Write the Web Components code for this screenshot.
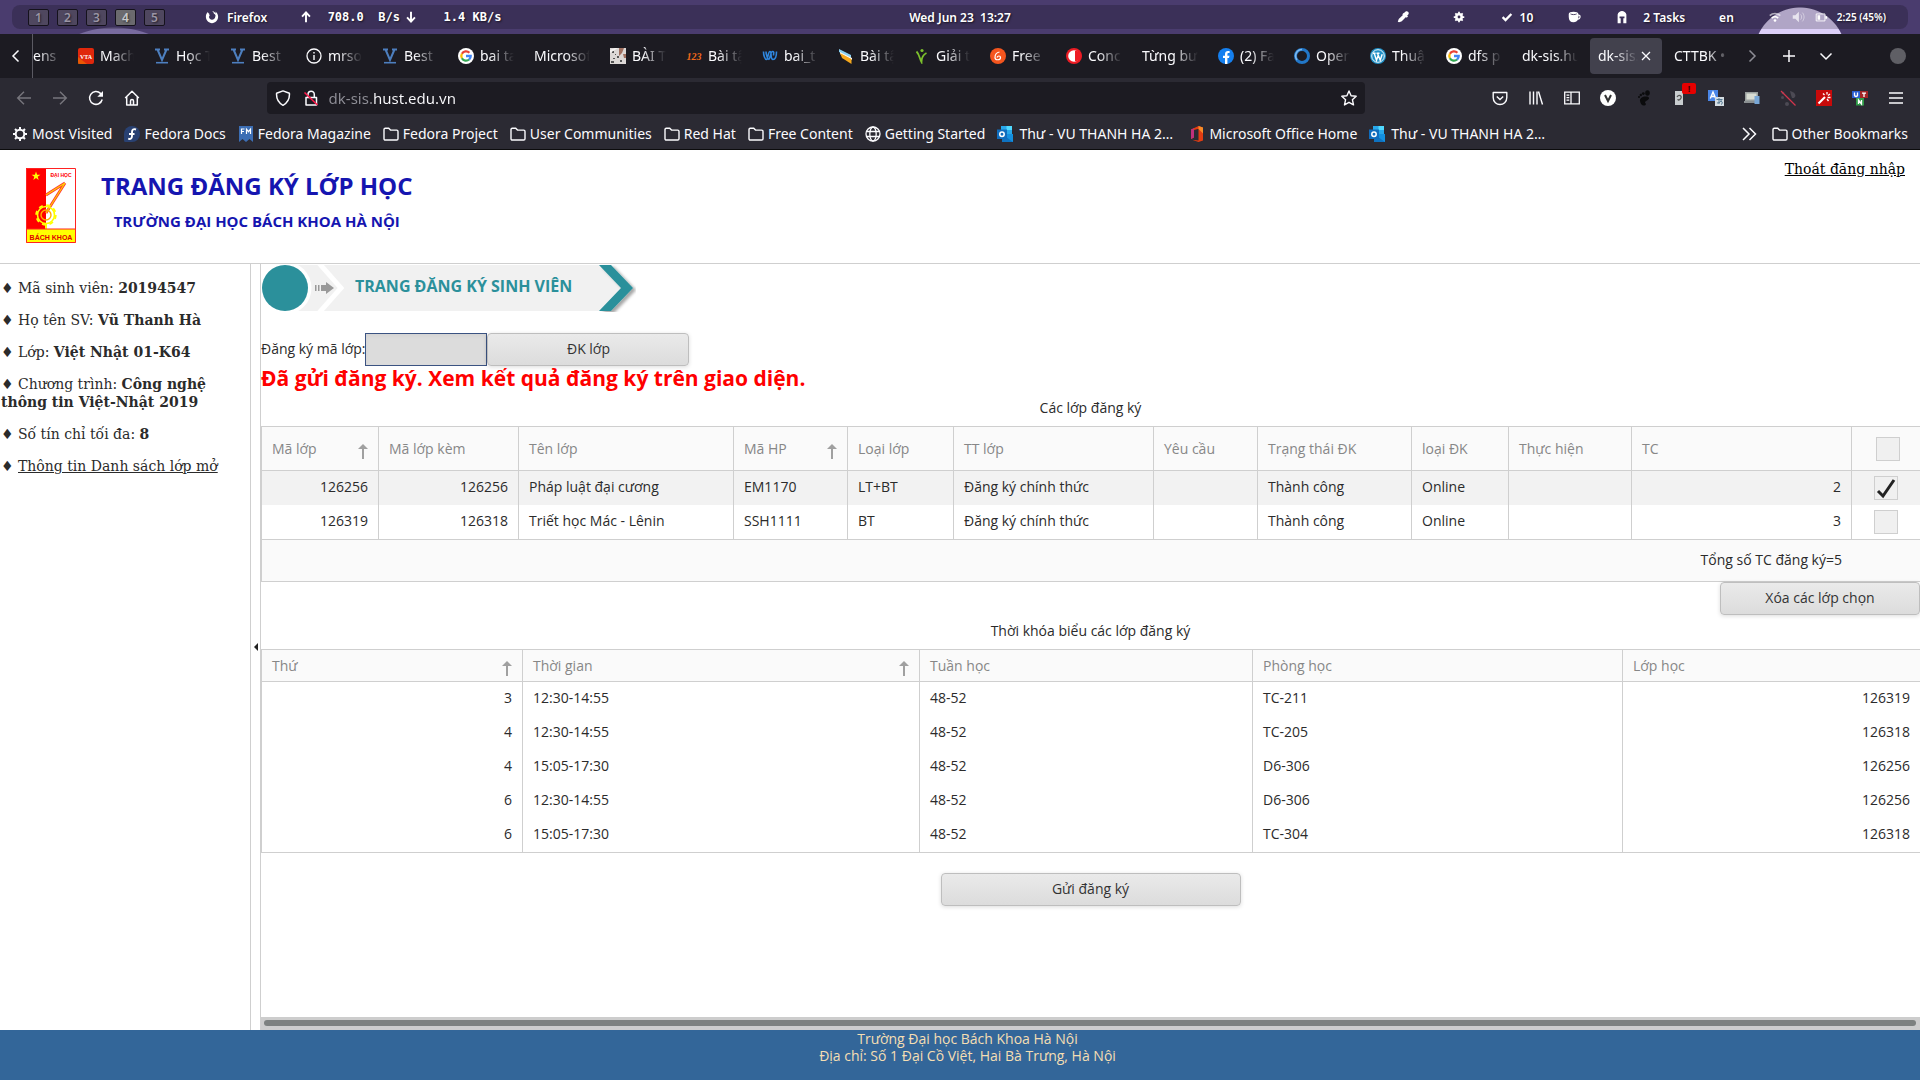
<!DOCTYPE html>
<html lang="vi">
<head>
<meta charset="utf-8">
<title>dk-sis.hust.edu.vn</title>
<style>
  html, body { margin: 0; height: 100%; }
  body { font-family: "Noto Sans", "Open Sans", sans-serif; font-size: 14px; color: #2b2b2b; background: #fff; }
</style>
</head>
<body>
<desktop-screen></desktop-screen>

<script>
const ICONS = {
  firefox: '<path fill="#fff" d="M8 1.2c1.2.8 2 1.800 2.200 3 .8.2 1.400.8 1.700 1.500.3.700.1 1.500-.2 1.900C11.600 9.500 10 11 8 11S4.600 9.600 4.600 8c0-.8.4-1.500.9-1.900-.5-.3-.8-1-.6-1.700-.8-.3-1.500-1-1.600-2C1.800 3.600 1 5.500 1 7.800 1 11.800 4.200 15 8 15s7-3.200 7-7.200c0-2.600-1.200-5-3.200-6.200.4.900.5 1.600.3 2.300C11.200 2.400 9.700 1.500 8 1.200z"/>',
  up: '<path d="M8 14V3M3.500 7.500 8 2.700l4.500 4.800" fill="none" stroke="#fff" stroke-width="2.200"/>',
  down: '<path d="M8 2v11M3.500 8.500 8 13.300l4.500-4.800" fill="none" stroke="#fff" stroke-width="2.200"/>',
  dropper: '<path fill="#fff" d="M9.500 3.200c1-1.700 2.800-2.600 4.300-1.200s.7 3.300-1 4.400l.9.900-1.500 1.500-.8-.7-4.500 4.500c-1 .9-2.300.7-3.400 1.400L2 13.500c.7-1.100.5-2.500 1.400-3.400L7.900 5.600l-.7-.8 1.500-1.500z"/>',
  cog: '<g fill="#fff"><circle cx="8" cy="8" r="4.500"/><path d="M7 2h2v12H7zM2 7h12v2H2zM3.100 4.500l1.400-1.400 8.400 8.400-1.400 1.400zM11.500 3.100l1.400 1.400-8.400 8.400-1.400-1.400z"/></g><circle cx="8" cy="8" r="1.600" fill="#3b3053"/>',
  tick: '<path d="M3 8.200 6.300 11.500 13 4.500" fill="none" stroke="#fff" stroke-width="2.600"/>',
  cup: '<path fill="#fff" d="M2 4.500C2 3 4.500 2 7.500 2S13 3 13 4.500v.7c1.800 0 2.600.8 2.600 2.500S14.500 11 12.400 11.200C11.600 13 10 14 7.500 14 4 14 2 12 2 8z"/><path d="M13 6.800c1 0 1 2.500-.3 2.500M4 4.500c1.500 1 5.500 1 7 0" fill="none" stroke="#3b3053"/>',
  helmet: '<path fill="#fff" d="M3 15V5C3.500 2.500 6 1 8 1s4.500 1.500 5 4v10H9.500V9.500h1.300V7.500H5.200v2h1.300V15z"/>',
  wifi: '<g fill="none" stroke="#fff" stroke-width="1.800"><path d="M2 6.500c3.500-3.400 8.500-3.400 12 0" opacity=".6"/><path d="M4.300 9.200c2.200-2 5.200-2 7.400 0"/></g><circle cx="8" cy="12" r="1.500" fill="#fff"/>',
  volume: '<path fill="#fff" d="M2 6h3l4-4v12l-4-4H2z" opacity=".7"/><path d="M11 5c1.500 1.600 1.500 4.400 0 6M13 3c2.600 3 2.600 7 0 10" fill="none" stroke="#fff" opacity=".5"/>',
  battery: '<path d="M2.500 4.500h10v8h-10z" fill="none" stroke="#fff"/><path fill="#fff" d="M4 6h3v5H4zM13 7h2v3h-2z"/>',
  chevL: '<path d="M10.500 2.500 5 8l5.500 5.500" fill="none" stroke="#fbfbfe" stroke-width="1.500"/>',
  chevR: '<path d="M5.500 2.500 11 8l-5.500 5.500" fill="none" stroke="#8d8d95" stroke-width="1.500"/>',
  chevD: '<path d="M2.500 5.500 8 11l5.500-5.500" fill="none" stroke="#fbfbfe" stroke-width="1.500"/>',
  plus: '<path d="M8 2v12M2 8h12" stroke="#fbfbfe" stroke-width="1.500"/>',
  close: '<path d="M4 4l8 8M12 4l-8 8" stroke="#fbfbfe" stroke-width="1.300"/>',
  profile: '<circle cx="8" cy="8" r="8" fill="#5f5f65"/>',
  vta: '<rect width="16" height="16" rx="2" fill="#e0280c"/><path d="M0 16V9l9 7z" fill="#f07800" opacity=".6"/><text x="8" y="10.500" font-size="6" font-weight="700" text-anchor="middle" fill="#fff" font-family="Liberation Serif">VTA</text>',
  vee: '<path d="M1 1.500h5M10 1.500h5M3.500 1.500 8 12l4.500-10.500" fill="none" stroke="#4d7fbf" stroke-width="2"/><path d="M2 14.700h12" stroke="#4d7fbf" stroke-width="1.600"/>',
  info: '<circle cx="8" cy="8" r="7" fill="none" stroke="#fbfbfe" stroke-width="1.300"/><path d="M8 7v5M8 4v1.600" stroke="#fbfbfe" stroke-width="1.400"/>',
  google: '<circle cx="8" cy="8" r="8" fill="#fff"/><g fill="none" stroke-width="2.300"><path d="M11.400 4.700A4.700 4.700 0 0 0 3.900 5.800" stroke="#ea4335"/><path d="M3.900 5.700a4.700 4.700 0 0 0 0 4.600" stroke="#fbbc05"/><path d="M3.900 10.300a4.700 4.700 0 0 0 7.200 1.200" stroke="#34a853"/><path d="M8 8h4.700a4.700 4.700 0 0 1-1.600 3.600" stroke="#4285f4"/></g>',
  photo: '<path fill="#dcd8d6" d="M0 0h16v16H0z"/><path fill="#555" d="M2 3h2v2H2zM7 8h2v2H7zM3 10h2v1H3zM1 13h3v2H1zM10 12h2v2h-2zM5 6h1v1H5z"/><path fill="#a07060" d="M9 0h5l-2 5-3 3zM13 6h3v4h-2z"/><path fill="#f3f1f0" d="M0 5l8-5H5L0 2z"/>',
  one23: '<text x="8" y="12" font-size="10" font-style="italic" font-weight="700" text-anchor="middle" fill="#f26a1b" font-family="Liberation Serif">123</text>',
  dub: '<path d="M1.500 3.500c0 4 1.500 8 3 8s1.500-8 3.500-8 0 8 3 8 3.500-4 3.500-8M4 3.500c0 4 2 8 3 8s1.500-8 3.500-8 1 2 1 4" fill="none" stroke="#2f86dd" stroke-width="1.600"/>',
  books: '<path fill="#8ad0f0" d="M1 1l12 6v3L1 4z"/><path fill="#fff" d="M2 4l12 6v2L2 6z"/><path fill="#f5a81c" d="M2 5l11.500 6V16L4 10z"/>',
  leafV: '<path d="M2.500 3.500c3 3 3 7 5 10.500 0-4 1-7 5-9" fill="none" stroke="#7cc02c" stroke-width="1.800"/><circle cx="8" cy="2.500" r="1.600" fill="#7cc02c"/>',
  orangeG: '<circle cx="8" cy="8" r="8" fill="#f4551e"/><path d="M9.500 4C6.500 4.500 5 7 5 9.500c0 3 5.500 3 5.500 0 0-2-3-2-3.500 0" fill="none" stroke="#fff" stroke-width="1.200"/>',
  halfO: '<circle cx="8" cy="8" r="8" fill="#ed1c24"/><circle cx="8" cy="8" r="5.800" fill="#fff"/><path fill="#ed1c24" d="M9 3h1.500a5 5 0 0 1 0 10H9z"/>',
  facebook: '<circle cx="8" cy="8" r="8" fill="#1580f0"/><path fill="#fff" d="M7 16V10H5V7.700h2V6c0-2 1.200-3.100 3-3.100l1.600.1v2h-1c-.9 0-1.200.5-1.200 1.200v1.500h2.100L11 10H9.400v6z"/>',
  ring: '<circle cx="8" cy="8" r="6.500" fill="none" stroke="#2277c8" stroke-width="3"/><path d="M8 1.500A6.500 6.500 0 0 0 3 12" fill="none" stroke="#7db9ee" stroke-width="1.600"/>',
  wordpress: '<circle cx="8" cy="8" r="8" fill="#1f8fc6"/><circle cx="8" cy="8" r="6.300" fill="none" stroke="#fff" stroke-width=".9"/><path d="M3 5.200h2.600M6.500 5.200h3M4.200 5.200l2.300 7 1.700-5M7.500 5.200l2.700 7 2-6" fill="none" stroke="#fff" stroke-width="1.400"/>',
  back: '<path d="M15 8H2M8 1.700 1.700 8 8 14.300" fill="none" stroke="#77767d" stroke-width="1.400"/>',
  forward: '<path d="M1 8h13M8 1.700 14.300 8 8 14.300" fill="none" stroke="#77767d" stroke-width="1.400"/>',
  reload: '<path d="M14.200 9.500A6.400 6.400 0 1 1 12.500 3.400L14 5" fill="none" stroke="#fbfbfe" stroke-width="1.500"/><path fill="#fbfbfe" d="M15 1v5.700H9.300z"/>',
  home: '<path d="M1.200 8 8 1.200 14.800 8M2.700 7v8h10.600V7M6.500 15v-4c0-2 3-2 3 0v4" fill="none" stroke="#fbfbfe" stroke-width="1.500" stroke-linejoin="round"/>',
  shield: '<path d="M8 .9 14.400 3.200C14.800 8.500 12.700 12.700 8 15.300 3.300 12.700 1.200 8.500 1.600 3.200z" fill="none" stroke="#fbfbfe" stroke-width="1.500" stroke-linejoin="round"/>',
  lock: '<path d="M3 7.500h10.500v7.500H3zM5 7V4.500c0-4.500 6.300-4.500 6.300 0V7" fill="none" stroke="#fbfbfe" stroke-width="1.500" stroke-linejoin="round"/><path d="M1.500 2.500 14.500 15" stroke="#ff1a4b" stroke-width="1.600"/>',
  star: '<path d="M8 1l2.100 4.700 5.100.5-3.800 3.500 1.100 5.200L8 12.300l-4.500 2.600 1.100-5.200L.8 6.200l5.100-.5z" fill="none" stroke="#fbfbfe" stroke-width="1.400" stroke-linejoin="round"/>',
  pocket: '<path d="M1.200 2.500h13.600v5c0 9.400-13.600 9.400-13.600 0z" fill="none" stroke="#fbfbfe" stroke-width="1.400" stroke-linejoin="round"/><path d="M4.800 6.500 8 9.500l3.200-3" fill="none" stroke="#fbfbfe" stroke-width="1.400"/>',
  library: '<path d="M2 1.500v13M5.500 1.500v13M9 1.500v13M10.500 1.500l4 13" fill="none" stroke="#fbfbfe" stroke-width="1.400"/>',
  sidebar: '<path d="M.7 2.200h14.600v11.600H.7zM7 2.500v11M2.500 5.200h2.800M2.500 7.700h2.800M2.500 10.200h2.800" fill="none" stroke="#fbfbfe" stroke-width="1.300"/>',
  vimium: '<circle cx="8" cy="8" r="8" fill="#fff"/><path d="M5 5l3 6 3-6" fill="none" stroke="#333" stroke-width="2"/>',
  foot: '<g fill="#0b0b0d"><ellipse cx="11.500" cy="3" rx="2.300" ry="2.800"/><circle cx="7.300" cy="3.600" r="1.400"/><circle cx="4.800" cy="5" r="1.200"/><circle cx="3" cy="7" r="1"/><path d="M11 6.500C7 6 3.500 8 4 11c.5 2.500 2 5 4.500 4.500 2-.4 1.500-2 .5-3-.7-.9 3.500-2.500 4-4 .3-1-.7-2-2-2z"/></g>',
  extbadge: '<path fill="#c9cdd0" d="M3 1h8v14H3z"/><path d="M5 7c2-3 5-1 4 1S6 11 6 9" fill="none" stroke="#555" stroke-width="1.300"/>',
  translate: '<path fill="#4a86e8" d="M0 0h10v11H0z"/><path d="M2.300 8.500 5 2l2.700 6.500M3.300 6.500h3.400" fill="none" stroke="#fff" stroke-width="1.400"/><path fill="#d5dde3" d="M7 7h9v9H7z"/><path d="M8.500 9.500h6M11 8v6M9 13c3 0 4-1.500 4.500-4M13 11c2 1 1.500 3 0 3.500" fill="none" stroke="#567a94" stroke-width="1"/>',
  laptop: '<path fill="#9aa09f" d="M1 2h13v9H1z"/><path fill="#d8dcd3" d="M2.500 3.500h10v6h-10z"/><path fill="#8a8f91" d="M0 11h13v2H0z"/><path fill="#78a6d6" d="M10.500 6h5v8h-5z"/>',
  slash: '<g fill="#4c4a54"><circle cx="3" cy="3" r="1.300"/><circle cx="2.500" cy="7.500" r="1.500"/><circle cx="7" cy="14" r="2"/><path d="M10 1c5 1 7 5 4 7h-2l-1-3z"/></g><path d="M1 1l14.500 14.500" stroke="#d2344c" stroke-width="1.300"/>',
  wand: '<path fill="#c80a0a" d="M0 0h16v16H0z"/><path d="M2.500 13.500 9 7" stroke="#fff" stroke-width="2.200"/><path d="M7 3.500l1.500 1.500M11 2v2.500M14 4l-2 1.500M11.500 7.500h3M11 9l1.500 2" stroke="#fff" stroke-width="1.300"/>',
  utn: '<path fill="#2a5fd0" d="M0 1h8v7H0z"/><path fill="#a32626" d="M8 1h8v7H8z"/><path fill="#2f9c48" d="M4 8h8v7.500H4z"/><path d="M2.500 2.500v3q1.500 2 3 0v-3M10 3.200h4M12 3v4M6.500 14V10l3 4v-4" fill="none" stroke="#fff" stroke-width="1.300"/>',
  menu: '<path d="M1 3h14M1 8h14M1 13h14" stroke="#fbfbfe" stroke-width="1.300"/>',
  gear: '<circle cx="8" cy="8" r="4.300" fill="none" stroke="#fbfbfe" stroke-width="2"/><path d="M8 1v2.500M8 12.500V15M1 8h2.500M12.500 8H15M3 3l1.800 1.800M11.200 11.200 13 13M13 3l-1.800 1.800M4.800 11.200 3 13" stroke="#fbfbfe" stroke-width="2"/>',
  fedora: '<path fill="#294172" d="M8 0a8 8 0 0 1 0 16H1.500A1.500 1.500 0 0 1 0 14.500V8a8 8 0 0 1 8-8z"/><path d="M12 3.500c-2.500-1-4 0-4 2.500v4c0 2.500-1.500 3.500-3.800 2.700M5 8h5.500" fill="none" stroke="#fff" stroke-width="1.900"/>',
  magazine: '<path fill="#3c6eb4" d="M1 0h14v16l-3.500-3L8 16l-3.500-3L1 16z"/><path d="M3.500 8V3h3M3.500 5.500H6M8.500 8V3.200l2 2.500 2-2.500V8" fill="none" stroke="#fff" stroke-width="1.200"/>',
  folder: '<path d="M1 3.500c0-.8.500-1.300 1.300-1.300h3.400l1.800 1.900h6.200c.8 0 1.300.5 1.300 1.300v7.300c0 .8-.5 1.300-1.300 1.300H2.300c-.8 0-1.300-.5-1.300-1.300z" fill="none" stroke="#fbfbfe" stroke-width="1.400"/>',
  globe: '<g fill="none" stroke="#fbfbfe" stroke-width="1.300"><circle cx="8" cy="8" r="7"/><ellipse cx="8" cy="8" rx="3.200" ry="7"/><path d="M1.500 5.500h13M1.500 10.500h13"/></g>',
  outlook: '<path fill="#28a8ea" d="M4 0h11v8H4z"/><path fill="#50d9ff" d="M9.500 0H15v4H9.500z"/><path fill="#1490df" d="M5 8h11v8H5z"/><path fill="#0a5fae" d="M5 8l11 8H5z" opacity=".6"/><path fill="#0f6cbd" d="M0 3.500h10v9.500H0z"/><circle cx="5" cy="8.200" r="2.200" fill="none" stroke="#fff" stroke-width="1.500"/>',
  office: '<path fill="#e23c12" d="M9.500 0 14 1.500v13L9.500 16 3 13.800l6.500.7V2.800L5 4v7.500L2 13V3.500z"/><path fill="#f78b28" d="M9.500 0 14 1.500v6L9.500 3z"/><path fill="#c0307c" d="M2 3.500 5 2.300v9.200L2 13z"/>',
  more: '<path d="M2 2l6 6-6 6M8.500 2l6 6-6 6" fill="none" stroke="#fbfbfe" stroke-width="1.500"/>'
};

const define = (name, html, after) => {
  const template = document.createElement('template');
  template.innerHTML = html;
  customElements.define(name, class extends HTMLElement {
    constructor() {
      super();
      this.attachShadow({ mode: 'open' }).appendChild(template.content.cloneNode(true));
    }
    connectedCallback() { if (after) after.call(this, this.shadowRoot); }
  });
};

define('ui-icon', `<style>:host{display:block;width:16px;height:16px;flex:none}svg{display:block;width:100%;height:100%}</style><svg viewBox="0 0 16 16" aria-hidden="true"></svg>`,
  function (root) { root.querySelector('svg').innerHTML = ICONS[this.getAttribute('name')] || ''; });

/* ---------- desktop panel ---------- */
define('work-space', `<style>
  :host{display:block}
  button{all:unset;box-sizing:border-box;display:block;width:21px;height:17px;border:1px solid #15121c;border-radius:2px;background:#4f475f;color:#9b95a5;font-size:12px;line-height:15px;text-align:center}
  :host([active]) button{background:#6b6a6e;color:#c8c8ca}
</style><button><slot></slot></button>`);

define('system-panel', `<style>
  :host{display:block;box-sizing:border-box;height:34px;padding:5px 12px;
    background:radial-gradient(circle 46px at 1800px 53px,#dccff8 45px,transparent 46px),
               radial-gradient(circle 96px at 114px 123px,#786b9f 95px,transparent 96px),#4a3c6e;
    color:#fff;font-size:12px;font-weight:600;text-shadow:1px 1px 2px rgba(0,0,0,.6)}
  .bar{display:grid;grid-template-columns:1fr auto 1fr;align-items:center;height:24px;border-radius:8px;background:rgba(0,0,0,.2)}
  .left,.right,.item{display:flex;align-items:center}
  .left{padding-left:16px}
  .spaces{display:flex;gap:8px;margin-right:40px}
  .item{gap:6px}
  .app{gap:8px;margin-right:32px}
  .net{font-family:"DejaVu Sans Mono","Liberation Mono",monospace;font-size:12px;font-weight:700;white-space:pre;gap:0}
  .net .rate{padding-right:4px}
  .net .total{padding-left:4px}
  .date{white-space:pre}
  .right{justify-content:flex-end;gap:34px;padding-right:22px}
  .status{gap:9px}
  .status span{font-size:10px}
  ui-icon{width:14px;height:14px}
  .pick{margin-right:8px}
  .task{gap:14px}
</style>
<div class="bar">
  <div class="left">
    <div class="spaces"><work-space>1</work-space><work-space>2</work-space><work-space>3</work-space><work-space active>4</work-space><work-space>5</work-space></div>
    <div class="item app"><ui-icon name="firefox"></ui-icon><span>Firefox</span></div>
    <div class="item net"><ui-icon name="up"></ui-icon><span class="rate">  708.0  B/s</span><ui-icon name="down"></ui-icon><span class="total">   1.4 KB/s</span></div>
  </div>
  <div class="date">Wed Jun 23  13:27</div>
  <div class="right">
    <ui-icon class="pick" name="dropper"></ui-icon><ui-icon name="cog"></ui-icon>
    <div class="item"><ui-icon name="tick"></ui-icon><span>10</span></div>
    <ui-icon name="cup"></ui-icon>
    <div class="item task"><ui-icon name="helmet"></ui-icon><span>2 Tasks</span></div>
    <span>en</span>
    <div class="item status"><ui-icon name="wifi"></ui-icon><ui-icon name="volume"></ui-icon><ui-icon name="battery"></ui-icon><span>2:25 (45%)</span></div>
  </div>
</div>`);

/* ---------- browser chrome ---------- */
define('browser-tab', `<style>
  :host{display:flex;align-items:center;gap:6px;box-sizing:border-box;width:72px;height:36px;padding:0 8px;border-radius:4px;flex:none;color:#fbfbfe;font-size:14px}
  :host([active]){background:#42414d}
  :host([active]){gap:0}
  span{flex:1;min-width:0;overflow:hidden;white-space:nowrap;line-height:24px;-webkit-mask-image:linear-gradient(to left,transparent,#000 24px);mask-image:linear-gradient(to left,transparent,#000 24px)}
  button{all:unset;display:none}
  :host([active]) button{display:block}
</style><slot name="icon"></slot><span><slot></slot></span><button aria-label="Close tab"><ui-icon name="close"></ui-icon></button>`);

const TABS = [['vta','Mach'],['vee','Học T'],['vee','Best'],['info','mrso'],['vee','Best'],['google','bai ta'],['','Microsof'],
  ['photo','BÀI T'],['one23','Bài tậ'],['dub','bai_t'],['books','Bài tậ'],['leafV','Giải t'],['orangeG','Free'],['halfO','Conc'],
  ['','Từng bư'],['facebook','(2) Fa'],['ring','Open'],['wordpress','Thuậ'],['google','dfs p'],['','dk-sis.hu']];

define('tab-strip', `<style>
  :host{display:flex;align-items:center;height:44px;background:#1c1b22}
  .scroll{all:unset;display:flex;justify-content:center;width:32px;flex:none}
  .tabs{display:flex;align-items:center;gap:4px;flex:none;height:100%;border-left:1px solid #5b5a63;overflow:hidden}
  .first{width:33px;padding:0 4px 0 0}
  .tools{display:flex;align-items:center;flex:1}
  .tools button{all:unset;display:flex;justify-content:center;width:28px}
  .tools .new{width:46px}
  .user{margin-left:auto;margin-right:14px}
</style>
<button class="scroll" aria-label="Scroll left"><ui-icon name="chevL"></ui-icon></button>
<div class="tabs">
  <browser-tab class="first">ens</browser-tab>
  ${TABS.map(([i, t]) => `<browser-tab>${i ? `<ui-icon slot="icon" name="${i}"></ui-icon>` : ''}${t}</browser-tab>`).join('')}
  <browser-tab active>dk-sis.</browser-tab><browser-tab>CTTBK •</browser-tab>
</div>
<div class="tools">
  <button aria-label="Scroll right"><ui-icon name="chevR"></ui-icon></button>
  <button class="new" aria-label="New tab"><ui-icon name="plus"></ui-icon></button>
  <button aria-label="All tabs"><ui-icon name="chevD"></ui-icon></button>
  <ui-icon class="user" name="profile"></ui-icon>
</div>`);

define('tool-button', `<style>:host{display:block}button{all:unset;display:flex;align-items:center;justify-content:center;position:relative;width:36px;height:32px}
  i{position:absolute;right:2px;top:1px;width:14px;height:11px;border-radius:2px;background:#e60000;color:#400;font:700 9px/11px "Noto Sans",sans-serif;text-align:center}
  </style>
  <button><i>!</i></button>`,
  function (root) {
    const button = root.querySelector('button'), icon = document.createElement('ui-icon');
    icon.setAttribute('name', this.getAttribute('icon'));
    button.setAttribute('aria-label', this.getAttribute('icon'));
    button.prepend(icon);
    if (!this.hasAttribute('badge')) root.querySelector('i').remove();
  });

define('nav-toolbar', `<style>
  :host{display:flex;align-items:center;height:40px;padding:0 6px;background:#2b2a33}
  .spring{flex:118}
  form{display:flex;align-items:center;flex:1096;height:32px;margin:0;padding:0 8px;border-radius:4px;background:#1c1b22;box-sizing:border-box}
  .lock{margin-left:12px;margin-right:10px}
  input{all:unset;flex:1;min-width:0;font:15px "Noto Sans",sans-serif;color:#fbfbfe;line-height:32px;
    background:linear-gradient(to right,#8f8f97 45px,#fbfbfe 45px);-webkit-background-clip:text;background-clip:text;-webkit-text-fill-color:transparent}
</style>
<tool-button icon="back"></tool-button><tool-button icon="forward"></tool-button><tool-button icon="reload"></tool-button><tool-button icon="home"></tool-button>
<div class="spring"></div>
<form><ui-icon name="shield"></ui-icon><ui-icon class="lock" name="lock"></ui-icon><input type="text" aria-label="Address" value="dk-sis.hust.edu.vn"><ui-icon name="star"></ui-icon></form>
<div class="spring"></div>
${['pocket','library','sidebar','vimium','foot','extbadge','translate','laptop','slash','wand','utn','menu'].map(n => `<tool-button icon="${n}"${n === 'extbadge' ? ' badge' : ''}></tool-button>`).join('')}`);

const MARKS = [['gear','Most Visited'],['fedora','Fedora Docs'],['magazine','Fedora Magazine'],['folder','Fedora Project'],['folder','User Communities'],['folder','Red Hat'],['folder','Free Content'],['globe','Getting Started'],['outlook','Thư - VU THANH HA 2…'],['office','Microsoft Office Home'],['outlook','Thư - VU THANH HA 2…']];
define('bookmark-bar', `<style>
  :host{display:flex;align-items:center;gap:12px;height:31px;padding:0 12px;background:#2b2a33;border-bottom:1px solid #0c0c0d;color:#fbfbfe;font-size:14px}
  a{display:flex;align-items:center;gap:4px;color:inherit;text-decoration:none;white-space:nowrap;line-height:24px}
  .full{gap:6px;width:180px}
  .more{margin-left:auto;padding-right:3px}
</style>
${MARKS.map(([i, t]) => `<a href="#"${t.endsWith('…') ? ' class="full"' : ''}><ui-icon name="${i}"></ui-icon><span>${t}</span></a>`).join('')}
<ui-icon class="more" name="more"></ui-icon><a href="#"><ui-icon name="folder"></ui-icon><span>Other Bookmarks</span></a>`);

/* ---------- site ---------- */
define('site-header', `<style>
  :host{display:flex;align-items:flex-start;box-sizing:border-box;height:114px;padding-left:26px;border-bottom:1px solid #cfcfcf;background:#fff}
  svg{display:block;margin-top:18px;flex:none}
  .titles{margin:18px 0 0 25px;text-align:center;color:#1515b0;font-family:"Open Sans","Noto Sans",sans-serif}
  h1,h2{margin:0;font-weight:700;white-space:nowrap}
  h1{font-size:24px;line-height:36px}
  h2{font-size:15px;line-height:34px}
  a{margin:8px 15px 0 auto;color:#000;font:14px/22px "DejaVu Serif",serif}
</style>
<svg width="50" height="75" viewBox="0 0 50 75" role="img" aria-label="Bách Khoa">
  <path fill="#fff" d="M0 0h50v75H0z"/><path fill="#f00" d="M0 0h20v61H0z"/><path fill="#ff0" d="M0 61h50v14H0z"/>
  <path fill="#ff0" d="M10 3.500l1.100 3.200h3.300l-2.700 2 1 3.200L10 10l-2.700 1.900 1-3.200-2.700-2h3.300z"/>
  <path d="M39 15 20 45M39 15 20 27" fill="none" stroke="#f33" stroke-width="2.800"/><path d="M39 15 20 45M39 15 20 27" fill="none" stroke="#ffd000" stroke-width="1.200"/>
  <circle cx="20" cy="47" r="8.500" fill="none" stroke="#ff0" stroke-width="1.600"/><circle cx="20" cy="47" r="9.800" fill="none" stroke="#ff0" stroke-width="1.800" stroke-dasharray="4 3.700"/><circle cx="20" cy="47" r="5" fill="none" stroke="#ffb000" stroke-width="1.400"/><path d="M20 56v5" stroke="#ff0" stroke-width="2"/>
  <text x="35" y="9" font-family="Liberation Sans" font-size="5" font-weight="700" fill="#f00" text-anchor="middle">ĐẠI HỌC</text>
  <text x="25" y="72" font-family="Liberation Sans" font-size="7" font-weight="700" fill="#e00000" text-anchor="middle">BÁCH KHOA</text>
  <path d="M.5.5h49v74H.5zM0 61h50" fill="none" stroke="#f22"/>
</svg>
<div class="titles"><h1>TRANG ĐĂNG KÝ LỚP HỌC</h1><h2>TRƯỜNG ĐẠI HỌC BÁCH KHOA HÀ NỘI</h2></div>
<a href="#">Thoát đăng nhập</a>`);

define('student-info', `<style>
  :host{display:block;box-sizing:border-box;width:251px;flex:none;padding:15px 1px;border-right:1px solid #cfcfcf;font:14px/18px "DejaVu Serif",serif;color:#2b2b2b}
  p{margin:0 0 14px}
  a{color:inherit}
</style>
<p>♦ Mã sinh viên: <b>20194547</b></p>
<p>♦ Họ tên SV: <b>Vũ Thanh Hà</b></p>
<p>♦ Lớp: <b>Việt Nhật 01-K64</b></p>
<p>♦ Chương trình: <b>Công nghệ</b> <b>thông tin Việt-Nhật 2019</b></p>
<p>♦ Số tín chỉ tối đa: <b>8</b></p>
<p>♦ <a href="#">Thông tin Danh sách lớp mở</a></p>`);

define('pane-splitter', `<style>:host{display:flex;align-items:center;justify-content:center;width:9px;flex:none;border-right:1px solid #cfcfcf}</style>
<svg width="4" height="8" viewBox="0 0 4 8"><path d="M4 0v8L0 4z" fill="#222"/></svg>`);

define('step-banner', `<style>
  :host{display:grid;width:375px;height:48px;align-items:center}
  svg,h2{grid-area:1/1}
  h2{margin:0;padding:0 0 4px 94px;color:#2b909b;font:700 16px/24px "Open Sans","Noto Sans",sans-serif;white-space:nowrap}
</style>
<svg width="375" height="48" viewBox="0 0 375 48" aria-hidden="true">
  <defs><filter id="s" x="-20%" y="-20%" width="150%" height="150%"><feDropShadow dx="3" dy="2" stdDeviation="1.500" flood-opacity=".35"/></filter></defs>
  <path fill="#f1f1f1" d="M24 1h319l24 23-24 23H24z"/>
  <circle cx="24" cy="24" r="26.500" fill="#fff"/><path fill="#fff" d="M0 0h24v48H0z"/><circle cx="24" cy="24" r="23" fill="#2b909b"/>
  <path d="M57-2 80 24 57 50" fill="none" stroke="#fff" stroke-width="5"/>
  <path fill="#999" d="M54 21h1.500v6H54zM57 21h1.500v6H57zM60 21h5v-3l8 6-8 6v-3h-5z"/>
  <path fill="#2b909b" filter="url(#s)" d="M338 1h12l22 23-22 23h-12l22-23z"/>
</svg><h2>TRANG ĐĂNG KÝ SINH VIÊN</h2>`);

define('form-button', `<style>:host{display:block}
  button{box-sizing:border-box;display:block;width:100%;height:33px;margin:0;padding:0 0 2px;border:1px solid #bebebe;border-radius:4px;background:linear-gradient(#eaeaea,#dcdcdc);box-shadow:0 1px 4px rgba(0,0,0,.14);font:inherit;color:#333;line-height:29px}
</style><button type="button"><slot></slot></button>`);

define('class-form', `<style>
  :host{display:flex;align-items:center;margin-top:21px;height:33px}
  label{white-space:nowrap;padding-bottom:2px}
  input{box-sizing:border-box;width:122px;height:33px;margin:0;border:1px solid #3b5382;background:#dcdcdc;border-radius:0;box-shadow:inset 0 2px 4px rgba(0,0,0,.04);font:inherit}
  form-button{width:202px}
</style><label for="code">Đăng ký mã lớp:</label><input id="code" type="text"><form-button>ĐK lớp</form-button>`);

define('check-box', `<style>:host{display:block;width:24px;height:24px}
  input{appearance:none;display:block;box-sizing:border-box;width:24px;height:24px;margin:0;border:1px solid #cfcfcf;background:#f0f0f0}
  label{display:grid}input,svg{grid-area:1/1}svg{display:none}:host([checked]) svg{display:block}
</style><label><input type="checkbox" aria-label="Chọn"><svg width="24" height="24" viewBox="0 0 24 24"><path d="M4 15 9 20 20 4" fill="none" stroke="#222" stroke-width="3"/></svg></label>`,
  function (root) { root.querySelector('input').checked = this.hasAttribute('checked'); });

const GRID = `
  :host{display:block}
  table{width:100%;table-layout:fixed;border-collapse:separate;border-spacing:0;border:1px solid #cfcfcf;border-right:0}
  th,td{box-sizing:border-box;padding:0 10px;border-right:1px solid #cfcfcf;white-space:nowrap;text-align:left;overflow:hidden}
  th:last-child,td:last-child{border-right:0}
  th{background:#fafafa;color:#878787;font-weight:400;border-bottom:1px solid #cfcfcf}
  th div{display:flex;align-items:center;justify-content:space-between}
  th svg{padding-top:6px;flex:none}
  td{height:34px;padding-bottom:2px}
  .n{text-align:right}`;
const head = (t, sort) => `<th scope="col"><div><span>${t}</span>${sort ? '<svg width="10" height="15" viewBox="0 0 10 15" aria-hidden="true"><path d="M5 15V4" stroke="#a0a0a0" stroke-width="2"/><path d="M0 5 5 0l5 5z" fill="#a0a0a0"/></svg>' : ''}</div></th>`;

const CLASSES = [
  ['126256','126256','Pháp luật đại cương','EM1170','LT+BT','Đăng ký chính thức','','Thành công','Online','','2',true],
  ['126319','126318','Triết học Mác - Lênin','SSH1111','BT','Đăng ký chính thức','','Thành công','Online','','3',false]];
define('class-grid', `<style>${GRID}
  th{height:44px}
  tbody tr:first-child td{background:#f2f2f2}
  .sel{padding:0 0 0 22px}
  th.sel{padding-left:24px}
  tfoot td{height:42px;background:#fafafa;border-top:1px solid #cfcfcf;border-right:0;text-align:right}
</style>
<table><colgroup>${[117,140,215,114,106,200,104,154,97,123,220].map(w => `<col style="width:${w}px">`).join('')}<col></colgroup>
<thead><tr>${[['Mã lớp',1],['Mã lớp kèm'],['Tên lớp'],['Mã HP',1],['Loại lớp'],['TT lớp'],['Yêu cầu'],['Trạng thái ĐK'],['loại ĐK'],['Thực hiện'],['TC']].map(h => head(...h)).join('')}<th class="sel"><check-box></check-box></th></tr></thead>
<tbody>${CLASSES.map(r => `<tr>${r.slice(0, 11).map((c, i) => `<td${[0, 1, 10].includes(i) ? ' class="n"' : ''}>${c}</td>`).join('')}<td class="sel"><check-box${r[11] ? ' checked' : ''}></check-box></td></tr>`).join('')}</tbody>
<tfoot><tr><td colspan="11">Tổng số TC đăng ký=5</td><td></td></tr></tfoot></table>`);

const SLOTS = [['3','12:30-14:55','48-52','TC-211','126319'],['4','12:30-14:55','48-52','TC-205','126318'],['4','15:05-17:30','48-52','D6-306','126256'],['6','12:30-14:55','48-52','D6-306','126256'],['6','15:05-17:30','48-52','TC-304','126318']];
define('timetable-grid', `<style>${GRID}
  th{height:32px}
</style>
<table><colgroup>${[261,397,333,370].map(w => `<col style="width:${w}px">`).join('')}<col></colgroup>
<thead><tr>${[['Thứ',1],['Thời gian',1],['Tuần học'],['Phòng học'],['Lớp học']].map(h => head(...h)).join('')}</tr></thead>
<tbody>${SLOTS.map(r => `<tr>${r.map((c, i) => `<td${i === 0 || i === 4 ? ' class="n"' : ''}>${c}</td>`).join('')}</tr>`).join('')}</tbody></table>`);

define('registration-pane', `<style>
  :host{display:flex;flex-direction:column;flex:1;min-width:0;font:14px/20px "Open Sans","Noto Sans",sans-serif;color:#2b2b2b}
  .msg{margin:0;color:#f00;font-size:21px;font-weight:700;line-height:24px;padding-bottom:2px}
  h3{margin:0;font-size:14px;font-weight:400;text-align:center;line-height:32px;padding-bottom:2px}
  .del{width:200px;margin-left:auto}
  .send{width:300px;margin:20px auto 0}
  .track{margin-top:auto;height:7px;padding:3px 4px 3px 3px;background:#cdcdcd}
  .thumb{height:6px;border-radius:3px;background:#7d8180}
</style>
<step-banner></step-banner>
<class-form></class-form>
<p class="msg">Đã gửi đăng ký. Xem kết quả đăng ký trên giao diện.</p>
<h3>Các lớp đăng ký</h3>
<class-grid></class-grid>
<form-button class="del">Xóa các lớp chọn</form-button>
<h3>Thời khóa biểu các lớp đăng ký</h3>
<timetable-grid></timetable-grid>
<form-button class="send">Gửi đăng ký</form-button>
<div class="track"><div class="thumb"></div></div>`);

define('site-footer', `<style>:host{display:block;box-sizing:border-box;height:50px;padding-left:15px;background:#336699;color:#f5deb3;font:14px/17px "Open Sans","Noto Sans",sans-serif;text-align:center}p{margin:0}</style>
<p>Trường Đại học Bách Khoa Hà Nội</p><p>Địa chỉ: Số 1 Đại Cồ Việt, Hai Bà Trưng, Hà Nội</p>`);

define('desktop-screen', `<style>:host{display:flex;flex-direction:column;min-height:100vh;overflow:hidden}main{display:flex;flex:1}</style>
<system-panel></system-panel><tab-strip></tab-strip><nav-toolbar></nav-toolbar><bookmark-bar></bookmark-bar>
<site-header></site-header>
<main><student-info></student-info><pane-splitter></pane-splitter><registration-pane></registration-pane></main>
<site-footer></site-footer>`);
</script>
</body>
</html>
